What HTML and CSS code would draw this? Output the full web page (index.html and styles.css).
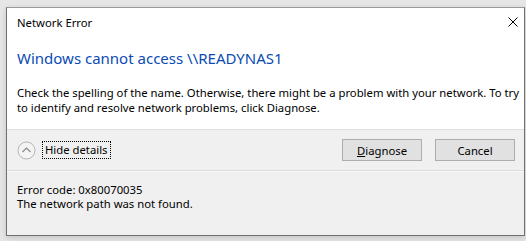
FILE: index.html
```html
<!DOCTYPE html>
<html lang="en">
<head>
    <meta charset="UTF-8">
    <title>Network Error</title>
    <link rel="stylesheet" href="styles.css">
</head>
<body>
    <div class="dialog">
        <div class="content">
            <div class="title-bar">
                <span class="title">Network Error</span>
                <button class="close-btn" aria-label="Close">
                    <svg width="10" height="10" viewBox="0 0 10 10">
                        <path d="M0.5 0.5 L9.5 9.5 M9.5 0.5 L0.5 9.5" stroke="#000" stroke-width="1" fill="none"/>
                    </svg>
                </button>
            </div>
            <h1 class="instruction">Windows cannot access \\READYNAS1</h1>
            <p class="message">Check the spelling of the name. Otherwise, there might be a problem with your network. To try to identify and resolve network problems, click Diagnose.</p>
        </div>

        <!-- Barra de botões -->
        <div class="actions">
            <div class="toggle">
                <span class="chevron">
                    <svg width="19" height="19" viewBox="0 0 19 19">
                        <circle cx="9.5" cy="9.5" r="8.5" stroke="#b4b4b4" stroke-width="1" fill="#f4f4f4"/>
                        <path d="M5.5 11 L9.5 7 L13.5 11" stroke="#8a8a8a" stroke-width="1.2" fill="none"/>
                    </svg>
                </span>
                <span class="toggle-label">Hide details</span>
            </div>
            <div class="buttons">
                <button class="btn"><u>D</u>iagnose</button>
                <button class="btn">Cancel</button>
            </div>
        </div>

        <div class="details">
            <p>Error code: 0x80070035</p>
            <p>The network path was not found.</p>
        </div>
    </div>
</body>
</html>
```

FILE: styles.css
```css
* {
    margin: 0;
    padding: 0;
    box-sizing: border-box;
}

body {
    font-family: "Noto Sans", "Liberation Sans", sans-serif;
    font-size: 11.3px;
    color: #000;
    background: #e6e6e6;
    padding: 7px 0 0 6px;
    width: 526px;
    height: 241px;
    overflow: hidden;
}

.dialog {
    width: 519px;
    height: 229px;
    border: 1px solid #707070;
    border-top-color: #9a9a9a;
    background: #f0f0f0;
    display: flex;
    flex-direction: column;
    box-shadow: 0 2px 6px rgba(0, 0, 0, 0.15);
}

.content {
    background: #fff;
    height: 121px;
    padding: 0 0 0 9px;
}

.title-bar {
    height: 28px;
    display: flex;
    align-items: center;
    justify-content: space-between;
}

.title {
    padding-left: 1px;
}

.close-btn {
    background: none;
    border: none;
    width: 46px;
    height: 28px;
    display: flex;
    align-items: center;
    justify-content: center;
    margin-right: -12px;
}

.instruction {
    font-weight: normal;
    font-size: 15px;
    line-height: 22px;
    color: #0b4bb3;
    margin-top: 11px;
    padding-left: 1px;
}

.message {
    margin-top: 16px;
    line-height: 15px;
    padding-left: 1px;
    padding-right: 4px;
}

.actions {
    height: 41px;
    border-top: 1px solid #dfdfdf;
    display: flex;
    align-items: center;
    justify-content: space-between;
    padding: 0 9px 0 10px;
}

.toggle {
    display: flex;
    align-items: center;
    gap: 6px;
}

.chevron {
    display: flex;
}

.toggle-label {
    border: 1px dotted #000;
    padding: 1px 2px;
    line-height: 14px;
}

.buttons {
    display: flex;
    gap: 13px;
}

.btn {
    font-family: inherit;
    font-size: 11.3px;
    width: 80px;
    height: 22px;
    background: #e1e1e1;
    border: 1px solid #adadad;
    color: #000;
}

.details {
    flex-grow: 1;
    border-top: 1px solid #dadada;
    box-shadow: inset 0 1px #fafafa;
    padding: 12px 0 0 10px;
    line-height: 14px;
}
```
